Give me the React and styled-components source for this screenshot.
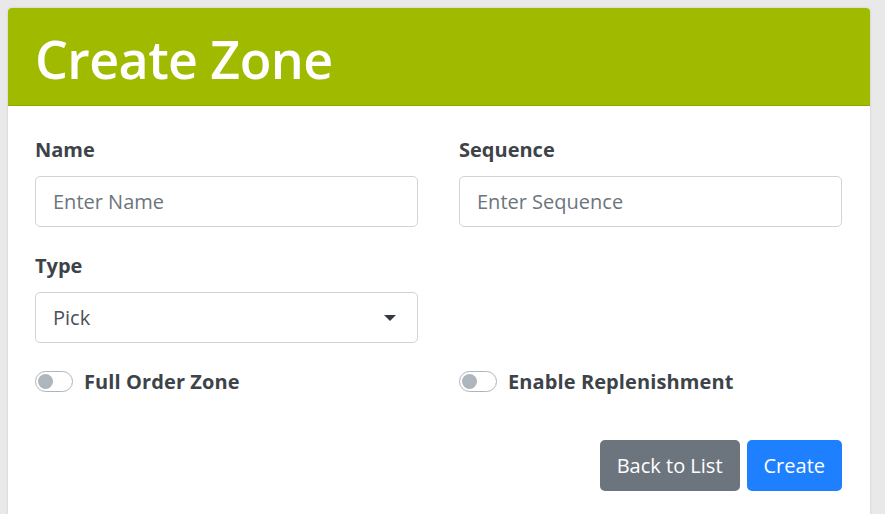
import React from "react";
import styled, { createGlobalStyle } from "styled-components";

const GlobalStyle = createGlobalStyle`
  body {
    margin: 0;
    background: #e9e9e9;
    font-family: "Open Sans", "Noto Sans", sans-serif;
  }
  * { box-sizing: border-box; }
`;

export default function App() {
  return (
    <>
      <GlobalStyle />
      <Page>
        <Card>
          <Header>
            <Title>Create Zone</Title>
          </Header>
          <Body>
            <Grid>
              <Field $space={27}>
                <Label>Name</Label>
                <Input placeholder="Enter Name" />
              </Field>
              <Field $space={27}>
                <Label>Sequence</Label>
                <Input placeholder="Enter Sequence" />
              </Field>
              <Field $space={23}>
                <Label>Type</Label>
                <SelectBox>
                  <span>Pick</span>
                  <Caret />
                </SelectBox>
              </Field>
              <div />
              <Toggle label="Full Order Zone" />
              <Toggle label="Enable Replenishment" />
            </Grid>
            <Actions>
              <Button $variant="secondary">Back to List</Button>
              <Button $variant="primary">Create</Button>
            </Actions>
          </Body>
        </Card>
      </Page>
    </>
  );
}

function Toggle({ label }) {
  return (
    <SwitchRow>
      <Track>
        <Knob />
      </Track>
      <SwitchLabel>{label}</SwitchLabel>
    </SwitchRow>
  );
}

const Page = styled.div`
  padding: 8px 15px 0 8px;
  height: 514px;
  overflow: hidden;
`;

const Card = styled.div`
  background: #fff;
  border-radius: 4px;
  box-shadow: 0 0 3px rgba(0, 0, 0, 0.12);
  min-height: 520px;
`;

const Header = styled.div`
  background: #a0ba00;
  border-radius: 4px 4px 0 0;
  border-bottom: 1px solid #8fa600;
  height: 98px;
  padding: 4px 27px 0;
  display: flex;
  align-items: center;
`;

const Title = styled.h1`
  margin: 0;
  color: #fff;
  font-size: 52px;
  font-weight: 600;
  line-height: 1;
  letter-spacing: -0.6px;
`;

const Body = styled.div`
  padding: 32px 28px 0 27px;
`;

const Grid = styled.div`
  display: grid;
  grid-template-columns: 1fr 1fr;
  column-gap: 41px;
`;

const Field = styled.div`
  display: flex;
  flex-direction: column;
  margin-bottom: ${(p) => p.$space}px;
`;

const Label = styled.label`
  font-size: 20px;
  font-weight: 700;
  color: #3d4348;
  line-height: 1.2;
  margin-bottom: 14px;
`;

const Input = styled.input`
  height: 51px;
  border: 1px solid #ced4da;
  border-radius: 5px;
  padding: 0 17px;
  font-family: inherit;
  font-size: 20px;
  color: #495057;
  outline: none;
  &::placeholder {
    color: #6c757d;
  }
`;

const SelectBox = styled.div`
  height: 51px;
  border: 1px solid #ced4da;
  border-radius: 5px;
  padding: 0 21px 0 17px;
  font-size: 20px;
  color: #495057;
  display: flex;
  align-items: center;
  justify-content: space-between;
`;

const Caret = styled.span`
  width: 0;
  height: 0;
  border-left: 6px solid transparent;
  border-right: 6px solid transparent;
  border-top: 6px solid #343a40;
`;

const SwitchRow = styled.div`
  display: flex;
  align-items: center;
  gap: 11px;
  height: 30px;
`;

const Track = styled.span`
  width: 38px;
  height: 21px;
  border: 1px solid #adb5bd;
  border-radius: 11px;
  background: #fff;
  display: flex;
  align-items: center;
  padding-left: 2px;
`;

const Knob = styled.span`
  width: 15px;
  height: 15px;
  border-radius: 50%;
  background: #adb5bd;
`;

const SwitchLabel = styled.span`
  font-size: 20px;
  font-weight: 700;
  color: #3d4348;
  letter-spacing: 0.1px;
`;

const Actions = styled.div`
  display: flex;
  justify-content: flex-end;
  gap: 7px;
  margin-top: 44px;
`;

const Button = styled.button`
  height: 51px;
  border: none;
  border-radius: 5px;
  padding: 0 17px;
  font-family: inherit;
  font-size: 20px;
  color: #fff;
  background: ${(p) => (p.$variant === "primary" ? "#1e7fff" : "#6c757d")};
`;
